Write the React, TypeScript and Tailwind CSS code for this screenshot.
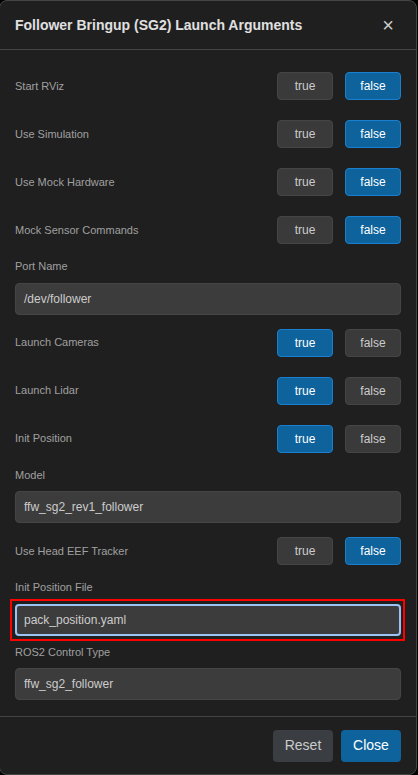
import React from "react";

type Row =
  | { kind: "bool"; label: string; value: boolean }
  | { kind: "text"; label: string; value: string; focus?: boolean };

const rows: Row[] = [
  { kind: "bool", label: "Start RViz", value: false },
  { kind: "bool", label: "Use Simulation", value: false },
  { kind: "bool", label: "Use Mock Hardware", value: false },
  { kind: "bool", label: "Mock Sensor Commands", value: false },
  { kind: "text", label: "Port Name", value: "/dev/follower" },
  { kind: "bool", label: "Launch Cameras", value: true },
  { kind: "bool", label: "Launch Lidar", value: true },
  { kind: "bool", label: "Init Position", value: true },
  { kind: "text", label: "Model", value: "ffw_sg2_rev1_follower" },
  { kind: "bool", label: "Use Head EEF Tracker", value: false },
  { kind: "text", label: "Init Position File", value: "pack_position.yaml", focus: true },
  { kind: "text", label: "ROS2 Control Type", value: "ffw_sg2_follower" },
];

function Toggle({ active, children }: { active: boolean; children: React.ReactNode }) {
  return (
    <button
      className={
        active
          ? "w-[56px] h-[28px] rounded-[4px] border border-[#1a7fcf] bg-[#0e639c] text-[12px] text-white"
          : "w-[56px] h-[28px] rounded-[4px] border border-[#454545] bg-[#3a3a3a] text-[12px] text-[#cccccc]"
      }
    >
      {children}
    </button>
  );
}

export default function App() {
  return (
    <div className="w-[418px] h-[775px] bg-black" style={{ fontFamily: '"Liberation Sans", Arial, sans-serif' }}>
      <div className="w-[418px] h-[775px] ml-[-1px] bg-[#1f1f1f] border border-[#454545] rounded-[8px] flex flex-col overflow-hidden">
        <div className="h-[49px] flex items-center justify-between pl-[15px] pr-[22px] border-b border-[#454545] shrink-0">
          <span className="text-[14px] font-bold text-[#e0e0e0]">Follower Bringup (SG2) Launch Arguments</span>
          <span className="text-[20px] leading-none text-[#cccccc]">×</span>
        </div>
        <div className="flex-1 px-[15px] pt-[12px]">
          {rows.map((r, i) =>
            r.kind === "bool" ? (
              <div key={i} className="h-[48px] flex items-center justify-between">
                <span className="text-[11px] text-[#a0a0a0]">{r.label}</span>
                <div className="flex gap-[12px]">
                  <Toggle active={r.value}>true</Toggle>
                  <Toggle active={!r.value}>false</Toggle>
                </div>
              </div>
            ) : (
              <div key={i} className="pt-[4px] pb-[4px]">
                <div className="text-[11px] leading-[16.5px] text-[#a0a0a0] mb-[8px]">{r.label}</div>
                {r.focus ? (
                  <div className="relative">
                    <div className="absolute left-[-5px] right-[-4px] top-[-5px] bottom-[-5px] border-2 border-[#ff0000] pointer-events-none" />
                    <div className="h-[32px] rounded-[4px] border-2 border-[#9cc3f5] bg-[#3c3c3c] flex items-center pl-[7px] text-[12px] text-[#cccccc]">
                      {r.value}
                    </div>
                  </div>
                ) : (
                  <div className="h-[32px] rounded-[4px] border border-[#454545] bg-[#3c3c3c] flex items-center pl-[8px] text-[12px] text-[#cccccc]">
                    {r.value}
                  </div>
                )}
              </div>
            )
          )}
        </div>
        <div className="h-[58px] border-t border-[#454545] flex items-center justify-end gap-[8px] pr-[15px] shrink-0">
          <button className="w-[60px] h-[32px] rounded-[4px] bg-[#3a3d41] text-[14px] text-[#cccccc]">Reset</button>
          <button className="w-[60px] h-[32px] rounded-[4px] bg-[#0e639c] text-[14px] text-white">Close</button>
        </div>
      </div>
    </div>
  );
}
